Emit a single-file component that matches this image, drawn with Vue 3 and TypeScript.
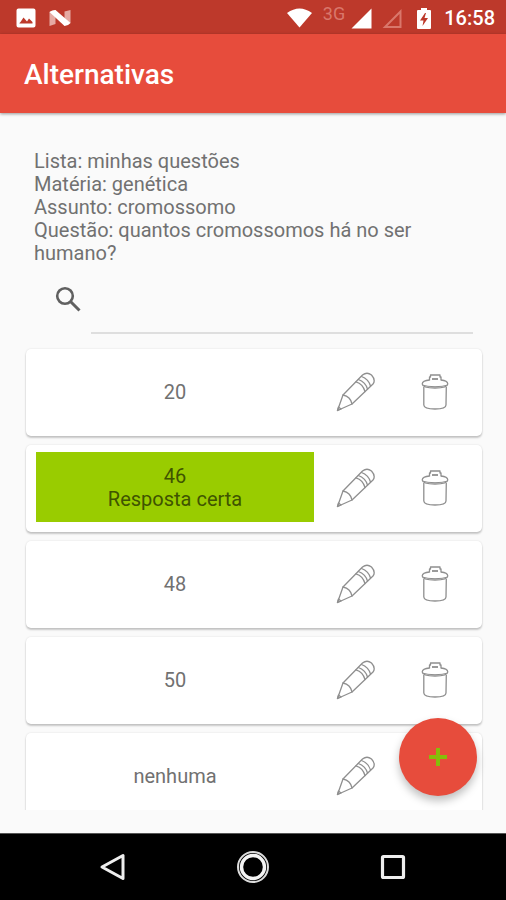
<script setup lang="ts">
import { ref } from 'vue'

interface Detail {
  name: string
  value: string
}

interface Alternative {
  text: string
  correct: boolean
}

const details: Detail[] = [
  { name: 'Lista', value: 'minhas questões' },
  { name: 'Matéria', value: 'genética' },
  { name: 'Assunto', value: 'cromossomo' },
  { name: 'Questão', value: 'quantos cromossomos há no ser humano?' },
]

const alternatives: Alternative[] = [
  { text: '20', correct: false },
  { text: '46', correct: true },
  { text: '48', correct: false },
  { text: '50', correct: false },
  { text: 'nenhuma', correct: false },
]

const query = ref('')
</script>

<template>
  <div class="screen">
    <div class="status">
      <div class="status-group notices">
        <svg width="20" height="20" viewBox="0 0 20 20" aria-hidden="true">
          <path
            fill="#fff"
            fill-rule="evenodd"
            d="M2.500 0.500h15a2 2 0 0 1 2 2v15a2 2 0 0 1-2 2h-15a2 2 0 0 1-2-2v-15a2 2 0 0 1 2-2zM3.500 15.500h13v-1.500l-3.500-3.500-2 3-3.500-4-3 4.500-1 1z"
          />
        </svg>
        <svg width="22" height="18" viewBox="0 0 22 18" aria-hidden="true">
          <path fill="#e6aaa3" d="M0.500 3l6-2v14l-6 2zM15.500 2.500l6-1.500v13l-6 2.500z" />
          <path fill="#fff" d="M0.500 3Q3 1 6.500 1L21.500 14Q19 17 15.500 17z" />
        </svg>
      </div>
      <div class="status-group">
        <svg class="wifi" width="27" height="20" viewBox="0 0 27 20" aria-hidden="true">
          <path fill="#fff" d="M1 5Q13.500-4 26 5L13.500 19.500z" />
        </svg>
        <span class="network">3G</span>
        <svg class="signal" width="21" height="21" viewBox="0 0 21 21" aria-hidden="true">
          <path fill="#fff" d="M20.500 0.500v20h-20z" />
        </svg>
        <svg class="signal-empty" width="21" height="21" viewBox="0 0 21 21" aria-hidden="true">
          <path fill="none" stroke="#d9776b" stroke-width="2" d="M18.500 3.500v15.500h-15.500z" />
        </svg>
        <svg class="battery" width="16" height="21" viewBox="0 0 16 21" aria-hidden="true">
          <path fill="#fff" d="M5 0h6v2h3q1 0 1 1v17q0 1-1 1H2q-1 0-1-1V3q0-1 1-1h3z" />
          <path fill="#bd392b" d="M9 5L4 12.500h3.500L6.500 18l5.500-8H8.500L10 5z" />
        </svg>
        <time class="clock">16:58</time>
      </div>
    </div>

    <header class="appbar">
      <h1>Alternativas</h1>
    </header>

    <main class="content">
      <div class="details">
        <p v-for="d in details" :key="d.name">{{ d.name }}: {{ d.value }}</p>
      </div>

      <div class="search">
        <label for="query" aria-label="Buscar">
          <svg width="26" height="26" viewBox="0 0 26 26" aria-hidden="true">
            <circle cx="10" cy="10" r="7.800" fill="none" stroke="#606060" stroke-width="2.600" />
            <path stroke="#606060" stroke-width="3" d="M15.500 15.500l9 9" />
          </svg>
        </label>
        <input id="query" v-model="query" type="text" />
      </div>

      <ul class="list">
        <li v-for="a in alternatives" :key="a.text" class="card">
          <div class="answer" :class="{ correct: a.correct }">
            <span>{{ a.text }}</span>
            <span v-if="a.correct">Resposta certa</span>
          </div>
          <button type="button" aria-label="Editar">
            <svg width="40" height="40" viewBox="0 0 40 40" fill="none" stroke="#8f8f8f" stroke-width="1.300" stroke-linejoin="round" stroke-linecap="round" aria-hidden="true">
              <path d="M1.500 38.500L7 23L26.500 3Q31-0.500 35.500 3Q40 8 37 12L16 32z" />
              <path d="M7 23Q14.500 24.500 16 32M1.500 38.500l1-3.500l2.500 2z" />
              <path d="M20 9.800Q27 12 29 19.500M22.300 7.500Q29.500 10 31.500 17M25.500 4.500Q32.500 7 34.500 14" />
            </svg>
          </button>
          <button type="button" aria-label="Excluir">
            <svg width="28" height="36" viewBox="0 0 28 36" fill="none" stroke="#8f8f8f" stroke-width="1.300" stroke-linejoin="round" aria-hidden="true">
              <path d="M8.500 6.500V3H9.500V1H19V3H20V6.500" />
              <path stroke-width="1.800" d="M11 5h6" />
              <path d="M8.500 6Q1.500 6.500 1.200 10Q1.500 14 14 14T26.800 10Q26.500 6.500 20 6" />
              <path stroke-width="1" d="M2 11.200Q6 12.700 14 12.700T26 11.200" />
              <path d="M2.800 13V31Q3 35 14 35T25 31L25.300 13" />
            </svg>
          </button>
        </li>
      </ul>

      <button type="button" class="fab" aria-label="Adicionar">
        <svg width="20" height="20" viewBox="0 0 20 20" aria-hidden="true">
          <path stroke="#86bd0a" stroke-width="4" d="M10 1v18M1 10h18" />
        </svg>
      </button>
    </main>

    <nav class="navbar">
      <button type="button" aria-label="Voltar">
        <svg width="30" height="30" viewBox="0 0 30 30" aria-hidden="true">
          <path fill="none" stroke="#eee" stroke-width="3" stroke-linejoin="round" d="M4 15L25 3.500v23z" />
        </svg>
      </button>
      <button type="button" aria-label="Início">
        <svg width="34" height="34" viewBox="0 0 34 34" fill="none" aria-hidden="true">
          <circle cx="17" cy="17" r="15" stroke="#ddd" stroke-width="2" />
          <circle cx="17" cy="17" r="11.500" stroke="#f4f4f4" stroke-width="3.400" />
        </svg>
      </button>
      <button type="button" aria-label="Recentes">
        <svg width="26" height="26" viewBox="0 0 26 26" aria-hidden="true">
          <rect x="2.500" y="2.500" width="21" height="21" rx="1" fill="none" stroke="#eee" stroke-width="3.200" />
        </svg>
      </button>
    </nav>
  </div>
</template>

<style>
body {
  background: #fafafa;
}
</style>

<style scoped>
.screen {
  display: flex;
  flex-direction: column;
  height: 100vh;
  background: #fafafa;
  color: #717171;
  font-family: Roboto, "Liberation Sans", sans-serif;
  font-size: 20px;
  line-height: 23px;
}

.screen * {
  box-sizing: border-box;
}

svg {
  display: block;
}

button {
  display: flex;
  align-items: center;
  justify-content: center;
  padding: 0;
  border: 0;
  background: none;
  cursor: pointer;
}

.status {
  display: flex;
  flex: none;
  align-items: center;
  justify-content: space-between;
  height: 34px;
  padding: 2px 11px 0 16px;
  background: #bd392b;
  color: #fff;
}

.status-group {
  display: flex;
  align-items: center;
}

.notices {
  gap: 13px;
}

.network {
  align-self: flex-start;
  margin: 0 6px 0 10px;
  color: #d9776b;
  font-size: 18px;
  line-height: 14px;
}

.signal-empty {
  margin-left: 10px;
}

.battery {
  margin: 0 12px 0 13px;
}

.clock {
  font-weight: 500;
}

.appbar {
  display: flex;
  z-index: 1;
  flex: none;
  align-items: center;
  height: 79px;
  padding: 2px 24px 0;
  background: #e74c3c;
  box-shadow: 0 1px 3px rgba(0, 0, 0, 0.4);
  color: #fff;
}

h1 {
  margin: 0;
  font-size: 28px;
  font-weight: 500;
  line-height: 32px;
}

.content {
  position: relative;
  display: flex;
  flex: 1;
  flex-direction: column;
  min-height: 0;
  padding: 37px 20px 23px;
}

.details {
  padding: 0 14px;
}

.details p {
  margin: 0;
}

.search {
  display: flex;
  flex: none;
  align-items: flex-start;
  gap: 10px;
  height: 69px;
  padding: 0 13px 0 35px;
}

.search label {
  flex: none;
  margin-top: 21px;
}

.search input {
  flex: 1;
  min-width: 0;
  height: 69px;
  padding: 18px 0 0;
  border: 0;
  border-bottom: 2px solid #dedede;
  outline: 0;
  background: none;
  color: inherit;
  font: inherit;
}

.list {
  display: flex;
  flex: 1;
  flex-direction: column;
  gap: 9px;
  min-height: 0;
  margin: 0;
  padding: 15px 4px 0 6px;
  overflow: hidden;
  list-style: none;
}

.card {
  display: grid;
  flex: none;
  grid-template-columns: 1fr 79px 79px;
  padding: 7px 8px 10px 10px;
  border-radius: 5px;
  background: #fff;
  box-shadow: 0 2px 2px rgba(0, 0, 0, 0.2), 0 0 2px rgba(0, 0, 0, 0.12);
}

.card button {
  padding-top: 2px;
}

.answer {
  display: flex;
  flex-direction: column;
  align-items: center;
  justify-content: center;
  height: 70px;
  margin-right: 2px;
  padding-top: 2px;
}

.correct {
  background: #99cc00;
  color: #3f5400;
}

.fab {
  position: absolute;
  right: 29px;
  bottom: 37px;
  width: 78px;
  height: 78px;
  border-radius: 50%;
  background: #e74c3c;
  box-shadow: 0 5px 8px rgba(0, 0, 0, 0.25);
}

.navbar {
  display: flex;
  flex: none;
  align-items: center;
  justify-content: center;
  height: 67px;
  border-top: 1px solid #555;
  background: #000;
}

.navbar button {
  width: 140px;
  height: 66px;
}
</style>
